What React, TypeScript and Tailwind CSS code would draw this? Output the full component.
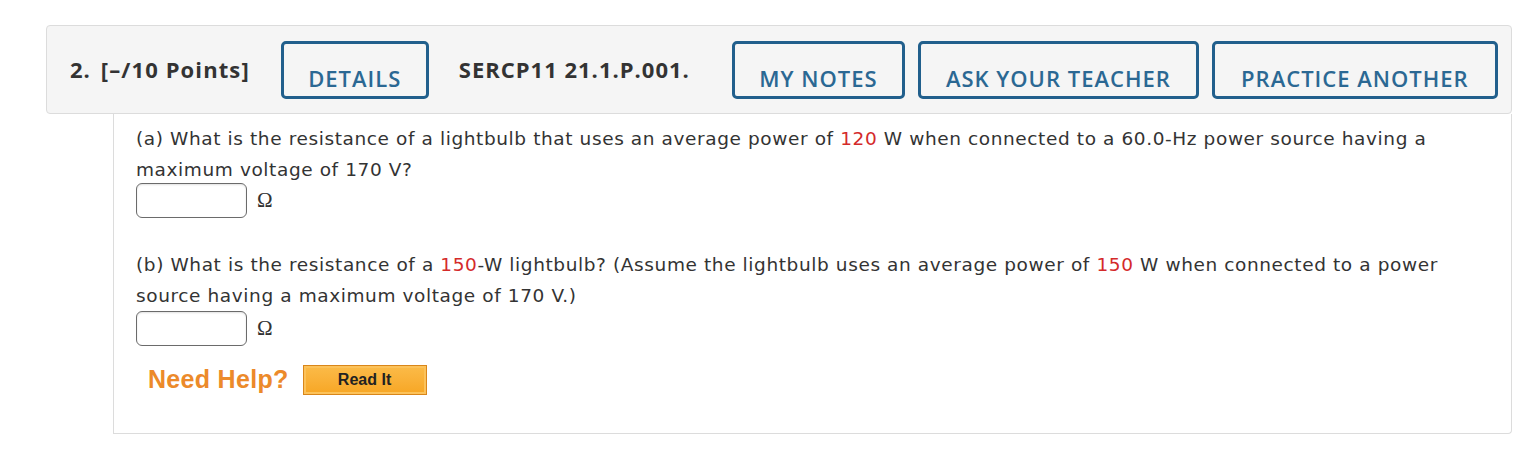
import React from 'react';

const headBtn =
  "h-[58px] shrink-0 rounded-[5px] border-[3px] border-[#215f8c] pt-[18px] text-[22px] font-semibold tracking-[1px] text-[#2b6893] flex items-center justify-center";

const bodyText = "font-['DejaVu_Sans',Verdana,sans-serif] text-[18.5px] tracking-[0.6px] leading-[31px]";

function Red({ children }: { children: React.ReactNode }) {
  return <span className="text-[#d42a2a]">{children}</span>;
}

function Answer() {
  return (
    <div className="flex items-center gap-[10px] h-[35px]">
      <div className="w-[111px] h-[35px] rounded-[6px] border border-[#6b6b6b] bg-white shadow-[inset_0_1px_2px_rgba(0,0,0,0.12)]" />
      <span className="font-['Liberation_Serif',serif] text-[21px] text-[#333]">Ω</span>
    </div>
  );
}

export default function App() {
  return (
    <div className="w-[1536px] h-[450px] bg-white pt-[25px]">
      <div className="ml-[46px] w-[1466px]">
        {/* question header */}
        <div className="h-[89px] rounded-[4px] border border-[#dcdcdc] bg-[#f5f5f5] flex items-center pl-[23px] font-['Open_Sans',sans-serif] text-[#333]">
          <span className="text-[22px] font-bold tracking-[1px]">2.</span>
          <span className="ml-[10px] text-[22px] font-bold tracking-[1.1px]">[–/10 Points]</span>
          <button className={headBtn + " ml-[31px] w-[148px]"}>DETAILS</button>
          <span className="ml-[30px] text-[22px] font-bold tracking-[1px]">SERCP11 21.1.P.001.</span>
          <button className={headBtn + " ml-[42px] w-[173px]"}>MY NOTES</button>
          <button className={headBtn + " ml-[13px] w-[281px]"}>ASK YOUR TEACHER</button>
          <button className={headBtn + " ml-[13px] w-[286px]"}>PRACTICE ANOTHER</button>
        </div>

        {/* question body */}
        <div className="ml-[67px] h-[320px] rounded-br-[4px] border border-t-0 border-[#dcdcdc] bg-white pl-[22px] pr-[36px] pt-[9px] text-[#333]">
          <p className={bodyText}>
            (a) What is the resistance of a lightbulb that uses an average power of <Red>120</Red> W when connected to a 60.0-Hz power source having a maximum voltage of 170 V?
          </p>
          <div className="-mt-[2px]">
            <Answer />
          </div>

          <p className={bodyText + " mt-[31px]"}>
            (b) What is the resistance of a <Red>150</Red>-W lightbulb? (Assume the lightbulb uses an average power of <Red>150</Red> W when connected to a power source having a maximum voltage of 170 V.)
          </p>
          <Answer />

          <div className="mt-[15px] ml-[12px] flex items-center gap-[14px]">
            <span className="font-['Liberation_Sans',Arial,sans-serif] text-[25px] tracking-[0.3px] font-bold text-[#ec8a2a]">Need Help?</span>
            <button className="w-[124px] h-[30px] border border-[#d9861a] bg-gradient-to-b from-[#fbbb48] to-[#f7a623] shadow-[inset_0_0_0_2px_#fcc25a] font-['Liberation_Sans',Arial,sans-serif] text-[16px] font-bold text-[#222]">
              Read It
            </button>
          </div>
        </div>
      </div>
    </div>
  );
}
